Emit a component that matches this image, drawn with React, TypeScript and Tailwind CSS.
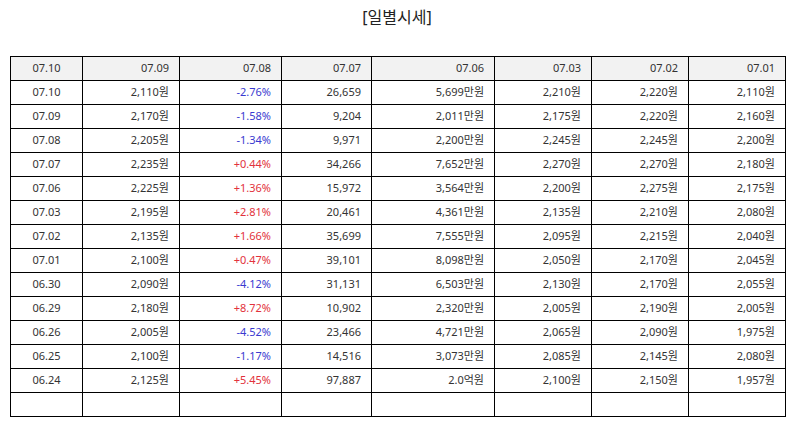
const HEADERS = ["07.10", "07.09", "07.08", "07.07", "07.06", "07.03", "07.02", "07.01"];

const COL_WIDTHS = ["w-[72px]", "w-[97px]", "w-[102px]", "w-[90px]", "w-[123px]", "w-[97px]", "w-[97px]", "w-[97px]"];

const ROWS: string[][] = [
  ["07.10", "2,110원", "-2.76%", "26,659", "5,699만원", "2,210원", "2,220원", "2,110원"],
  ["07.09", "2,170원", "-1.58%", "9,204", "2,011만원", "2,175원", "2,220원", "2,160원"],
  ["07.08", "2,205원", "-1.34%", "9,971", "2,200만원", "2,245원", "2,245원", "2,200원"],
  ["07.07", "2,235원", "+0.44%", "34,266", "7,652만원", "2,270원", "2,270원", "2,180원"],
  ["07.06", "2,225원", "+1.36%", "15,972", "3,564만원", "2,200원", "2,275원", "2,175원"],
  ["07.03", "2,195원", "+2.81%", "20,461", "4,361만원", "2,135원", "2,210원", "2,080원"],
  ["07.02", "2,135원", "+1.66%", "35,699", "7,555만원", "2,095원", "2,215원", "2,040원"],
  ["07.01", "2,100원", "+0.47%", "39,101", "8,098만원", "2,050원", "2,170원", "2,045원"],
  ["06.30", "2,090원", "-4.12%", "31,131", "6,503만원", "2,130원", "2,170원", "2,055원"],
  ["06.29", "2,180원", "+8.72%", "10,902", "2,320만원", "2,005원", "2,190원", "2,005원"],
  ["06.26", "2,005원", "-4.52%", "23,466", "4,721만원", "2,065원", "2,090원", "1,975원"],
  ["06.25", "2,100원", "-1.17%", "14,516", "3,073만원", "2,085원", "2,145원", "2,080원"],
  ["06.24", "2,125원", "+5.45%", "97,887", "2.0억원", "2,100원", "2,150원", "1,957원"],
];

function changeColor(v: string) {
  if (v.startsWith("+")) return "text-[#e2323c]";
  if (v.startsWith("-")) return "text-[#3a3ad0]";
  return "text-[#333]";
}

export default function App() {
  return (
    <div
      className="w-[794px] h-[425px] bg-white px-[10px] pt-[6px]"
      style={{ fontFamily: "'Noto Sans', 'Noto Sans CJK KR', sans-serif" }}
    >
      {/* 제목 */}
      <h1 className="text-center text-[16px] leading-[22px] text-[#222] font-normal">[일별시세]</h1>

      <table className="mt-[28px] w-[775px] border-collapse table-fixed text-[11px] text-[#333]">
        <colgroup>
          {COL_WIDTHS.map((w, i) => (
            <col key={i} className={w} />
          ))}
        </colgroup>
        <thead>
          <tr className="h-[24px] bg-[#f2f2f2]">
            {HEADERS.map((h, i) => (
              <th
                key={h}
                className={`border border-black font-normal p-0 ${i === 0 ? "text-center" : "text-right pr-[10px]"}`}
              >
                {h}
              </th>
            ))}
          </tr>
        </thead>
        <tbody>
          {ROWS.map((row) => (
            <tr key={row[0]} className="h-[24px]">
              {row.map((cell, i) => (
                <td
                  key={i}
                  className={`border border-black p-0 ${i === 0 ? "text-center" : "text-right pr-[10px]"} ${
                    i === 2 ? changeColor(cell) : ""
                  }`}
                >
                  {cell}
                </td>
              ))}
            </tr>
          ))}
          <tr className="h-[24px]">
            {HEADERS.map((h) => (
              <td key={h} className="border border-black p-0"></td>
            ))}
          </tr>
        </tbody>
      </table>
    </div>
  );
}
